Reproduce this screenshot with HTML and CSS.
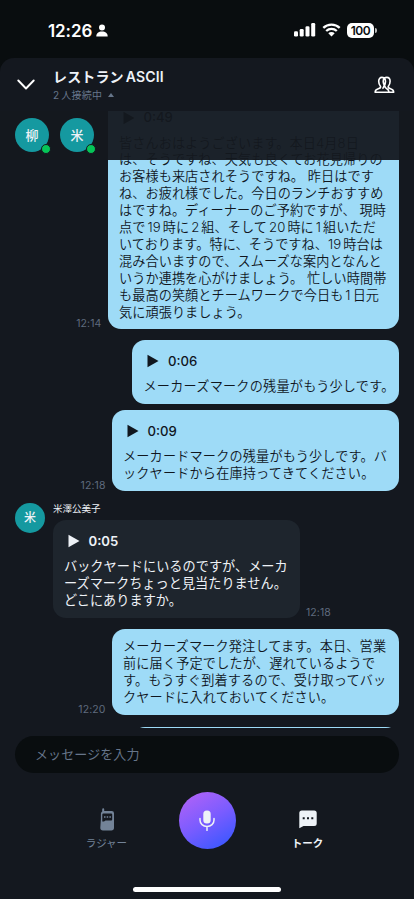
FILE: index.html
```html
<!DOCTYPE html>
<html lang="ja">
<head>
<meta charset="utf-8">
<title>レストランASCII</title>
<link rel="stylesheet" href="styles.css">
</head>
<body>
<div class="phone">
  <div class="status">
    <div class="clock">12:26
      <svg width="12" height="13" viewBox="0 0 12 13"><circle cx="6" cy="3.4" r="3"/><path d="M.3 12.4C.3 9.2 2.6 7.500 6 7.500s5.700 1.700 5.700 4.900z"/></svg>
    </div>
    <div class="signals">
      <svg width="22" height="14" viewBox="0 0 22 14"><rect x="0" y="8.300" width="4" height="5.200" rx="1.300"/><rect x="5.700" y="6" width="4" height="7.500" rx="1.300"/><rect x="11.500" y="3.200" width="4" height="10.300" rx="1.300"/><rect x="17.200" y="0" width="4" height="13.500" rx="1.300"/></svg>
      <svg class="wifi" width="19" height="14" viewBox="0 0 19 14"><path class="arc" d="M1.300 4.900a11.700 11.700 0 0 1 16.400 0M4.200 8a7.600 7.600 0 0 1 10.600 0"/><path d="M9.500 13.600 6.300 10.300a4.600 4.600 0 0 1 6.400 0z"/></svg>
      <div class="battery">100</div>
      <div class="tip"></div>
    </div>
  </div>
  <div class="app">
    <header class="head">
      <svg class="down" width="18" height="12" viewBox="0 0 18 12"><path d="M1.300 1.500 9 9.500l7.700-8"/></svg>
      <div class="titles">
        <h1>レストラン<span class="gap"></span>ASCII</h1>
        <p>2<span class="gap"></span>人接続中 <i class="tri"></i></p>
      </div>
      <svg class="people" width="21" height="18" viewBox="0 0 21 18"><path d="M6.600 10.500C5.400 9.200 4.700 7.500 4.700 5.300 4.700 2.800 6 1.400 7.900 1.400c1 0 1.800.4 2.400 1 .6-.6 1.400-1 2.500-1 2 0 3.300 1.400 3.300 3.900 0 2.200-.7 3.900-1.900 5.200-.2 1.300.4 1.700 2.300 2.300 2.300.7 3.100 1.300 3.200 3.500H1.100c.1-2.200.9-2.800 3.200-3.500 1.900-.6 2.500-1 2.300-2.300z"/><path d="M10.300 2.400c1 .9 1.300 1.900 1.200 3.200-.1 2-.7 3.500-1.700 4.700 0 1.200-.3 1.700-1.400 2.400M10.300 2.400C9.400 3.300 9.100 4.400 9.200 5.600c.1 2 .8 3.500 1.700 4.700.1 1.200.6 1.800 1.900 2.400 1.400.7 2 1.400 2.100 3.400"/></svg>
    </header>
    <main class="chat">
      <div class="members">
        <div class="avatar">柳<i></i></div>
        <div class="avatar">米<i></i></div>
      </div>
      <div class="list">
        <section class="row mine first">
          <time>12:14</time>
          <div class="bubble w-xl">
            <div class="play"><svg width="12" height="14" viewBox="0 0 12 14"><path d="M.5.8v12.400L11.500 7z"/></svg>0:49</div>
            <p>皆さんおはようございます。本日4月8日</p>
            <p>は、そうですね、天気も良くてお花見帰りの</p>
            <p>お客様も来店されそうですね。 昨日はです</p>
            <p>ね、お疲れ様でした。今日のランチおすすめ</p>
            <p>はですね。ディーナーのご予約ですが、 現時</p>
            <p>点で<b>19</b>時に<b>2</b>組、そして<b>20</b>時に<b>1</b>組いただ</p>
            <p>いております。特に、そうですね、<b class="after">19</b>時台は</p>
            <p>混み合いますので、スムーズな案内となんと</p>
            <p>いうか連携を心がけましょう。 忙しい時間帯</p>
            <p>も最高の笑顔とチームワークで今日も<b>1</b>日元</p>
            <p>気に頑張りましょう。</p>
          </div>
        </section>
        <section class="row mine second">
          <div class="bubble w-s">
            <div class="play"><svg width="12" height="14" viewBox="0 0 12 14"><path d="M.5.8v12.400L11.500 7z"/></svg>0:06</div>
            <p>メーカーズマークの残量がもう少しです。</p>
          </div>
        </section>
        <section class="row mine third">
          <time>12:18</time>
          <div class="bubble w-l">
            <div class="play"><svg width="12" height="14" viewBox="0 0 12 14"><path d="M.5.8v12.400L11.500 7z"/></svg>0:09</div>
            <p>メーカードマークの残量がもう少しです。バ</p>
            <p>ックヤードから在庫持ってきてください。</p>
          </div>
        </section>
        <section class="row theirs">
          <div class="avatar small">米</div>
          <div class="post">
            <div class="name">米澤公美子</div>
            <div class="bubble dark">
              <div class="play"><svg width="12" height="14" viewBox="0 0 12 14"><path d="M.5.8v12.400L11.500 7z"/></svg>0:05</div>
              <p>バックヤードにいるのですが、メーカ</p>
              <p>ーズマークちょっと見当たりません。</p>
              <p>どこにありますか。</p>
            </div>
          </div>
          <time>12:18</time>
        </section>
        <section class="row mine fourth">
          <time>12:20</time>
          <div class="bubble w-l textonly">
            <p>メーカーズマーク発注してます。本日、営業</p>
            <p>前に届く予定でしたが、遅れているようで</p>
            <p>す。もうすぐ到着するので、受け取ってバッ</p>
            <p>クヤードに入れておいてください。</p>
          </div>
        </section>
        <section class="row mine fifth"><div class="bubble w-s next"></div></section>
      </div>
    </main>
    <div class="input">メッセージを入力</div>
    <nav class="tabs">
      <div class="tab roger">
        <svg width="16" height="23" viewBox="0 0 16 23"><path d="M3.200 1.200a1 1 0 0 1 2 0V3h7.500a2.300 2.300 0 0 1 2.300 2.300v14.500a2.700 2.700 0 0 1-2.700 2.700H4a2.700 2.700 0 0 1-2.700-2.700L1.900 11V6c0-1.100.5-2 1.300-2.500z"/><path class="ink" d="M4.300 5.500h7.900a1 1 0 0 1 1 1v5a1 1 0 0 1-1 1H6.500l-1.500 1H3.300v-7a1 1 0 0 1 1-1z"/><path d="M5 8.200h1.500v1.500H5zM7.700 8.200h1.500v1.500H7.700zM10.400 8.200h1.500v1.500h-1.500z"/></svg>
        ラジャー
      </div>
      <div class="mic">
        <svg width="16" height="21" viewBox="0 0 16 21"><rect x="4.300" y=".5" width="7.400" height="13" rx="3.500"/><path class="stroke" d="M1 8.500v1.500c0 3.800 3 6.400 7 6.400s7-2.600 7-6.400V8.500M8 16.400v4"/></svg>
      </div>
      <div class="tab talk">
        <svg width="18" height="19" viewBox="0 0 18 19"><path d="M2.800.5h12.400a2.500 2.500 0 0 1 2.500 2.500v10.500a2.500 2.500 0 0 1-2.500 2.500H4.500L.3 18.300V3A2.500 2.500 0 0 1 2.800.5z"/><path class="ink" d="M3.700 7.300h2v2h-2zM8 7.300h2v2H8zM12.300 7.300h2v2h-2z"/></svg>
        トーク
      </div>
    </nav>
    <div class="homebar"></div>
  </div>
</div>
</body>
</html>
```
FILE: styles.css
```css
* { box-sizing: border-box; }
body {
  margin: 0;
  background: #090d0f;
  font-family: Inter, "Noto Sans CJK JP", sans-serif;
  color: #eef2f7;
}
h1, p { margin: 0; }
svg { display: block; fill: currentColor; flex: none; }
.phone { width: 414px; height: 899px; overflow: hidden; display: flex; flex-direction: column; }

.status { height: 58px; flex: none; display: flex; justify-content: space-between; padding: 0 37px 0 48px; color: #fff; }
.clock { display: flex; align-items: center; gap: 4px; height: 61px; font-size: 17px; font-weight: 600; letter-spacing: -.1px; }
.signals { display: flex; align-items: center; height: 60px; }
.wifi { margin-left: 6px; }
.wifi .arc { fill: none; stroke: #fff; stroke-width: 2.300; }
.battery { width: 27px; height: 15px; margin-left: 6px; border-radius: 5px; background: #fff; color: #090d0f; font-size: 12px; font-weight: 600; line-height: 15px; text-align: center; letter-spacing: -.4px; }
.tip { width: 2px; height: 5px; margin-left: 1px; border-radius: 0 2px 2px 0; background: #bbb; }

.app { flex: 1; min-height: 0; display: flex; flex-direction: column; background: #14181f; border-radius: 14px 14px 0 0; }
.head { height: 53px; flex: none; display: flex; padding: 0 19px 0 17px; }
.down { margin-top: 21px; fill: none; stroke: #fff; stroke-width: 1.900; stroke-linecap: round; stroke-linejoin: round; }
.titles { flex: 1; padding: 9px 0 0 18px; }
h1 { font-size: 14px; line-height: 20px; font-weight: 600; white-space: nowrap; letter-spacing: .15px; }
.gap { display: inline-block; width: 2px; }
.titles p { font-size: 10px; line-height: 16px; color: #66758a; white-space: nowrap; letter-spacing: .25px; }
.tri { display: inline-block; margin: 0 0 2px 3px; border: 3.500px solid transparent; border-top: 0; border-bottom: 4px solid #66758a; }
.people { margin-top: 18px; fill: none; stroke: #fff; stroke-width: 1.600; stroke-linejoin: round; }

.chat { position: relative; height: 617px; flex: none; overflow: hidden; }
.members { position: absolute; z-index: 1; top: 0; left: 0; right: 0; height: 48.500px; padding: 7px 15px; display: flex; gap: 11px; background: rgba(20, 24, 31, .95); }
.avatar { position: relative; width: 34px; height: 34px; flex: none; border-radius: 50%; background: #1599a0; font-size: 13px; font-weight: 500; line-height: 34px; text-align: center; }
.avatar i { position: absolute; right: -2px; bottom: -2px; width: 10px; height: 10px; border-radius: 50%; background: #05c557; border: 1px solid #14181f; }
.small { width: 30px; height: 30px; line-height: 30px; font-size: 12px; margin-top: 1px; }

.list { margin-top: -14.500px; padding: 0 15px; display: flex; flex-direction: column; }
.row { display: flex; align-items: flex-end; }
.mine { justify-content: flex-end; }
time { flex: none; font-size: 10.500px; line-height: 12px; color: #5f6b7e; padding: 0 6px; margin-bottom: -1px; letter-spacing: .1px; }
.bubble { flex: none; padding: 9px 11.500px; border-radius: 13px; background: #9edbf7; color: #10161e; font-size: 13.150px; line-height: 16.900px; }
.bubble p { white-space: pre; font-weight: 350; letter-spacing: .17px; }
.bubble b { font-weight: 350; margin: 0 2px; }
.bubble .after { margin-left: 0; }
.bubble.dark p { font-weight: 400; letter-spacing: .03px; }
.w-xl { width: 291.500px; }
.bubble.w-xl p { letter-spacing: .08px; }
.w-l { width: 287.500px; }
.w-s { width: 267px; }
.bubble.w-s p { letter-spacing: .22px; }
.play { display: flex; align-items: center; gap: 9px; height: 24px; margin-bottom: 5px; padding-left: 3.500px; font-weight: 500; }
.second { margin-top: 11px; }
.third { margin-top: 6px; }
.theirs { margin-top: 11px; }
.theirs .avatar { align-self: flex-start; }
.post { margin-left: 8px; }
.name { font-size: 9.500px; line-height: 14px; margin-bottom: 4px; }
.dark { width: 247px; padding-left: 11px; background: #1e252d; color: #eef2f7; }
.dark .play { font-weight: 600; }
.fourth { margin-top: 11px; }
.fifth { margin-top: 12px; }
.next { height: 64px; }

.input { height: 37px; margin: 8px 15px 0; flex: none; border-radius: 19px; background: #090d0f; padding-left: 20px; font-size: 13px; line-height: 36px; color: #66758a; letter-spacing: .1px; }
.tabs { height: 105px; flex: none; display: flex; justify-content: center; padding-top: 19px; }
.tab { width: 58px; padding-top: 16px; display: flex; flex-direction: column; align-items: center; font-size: 10.500px; line-height: 16px; gap: 5px; }
.roger { margin-right: 43px; color: #738398; }
.talk { margin-left: 43px; font-weight: 700; }
.ink { fill: #14181f; }
.talk svg { margin: 2px 0; }
.mic { width: 57px; height: 57px; border-radius: 50%; display: flex; align-items: center; justify-content: center; background: linear-gradient(150deg, #ae62f7 8%, #7a5cff 50%, #3557ff 95%); }
.stroke { fill: none; stroke: #eef2f7; stroke-width: 1.500; stroke-linecap: round; }
.homebar { width: 148px; height: 5px; margin: 9px auto 0; flex: none; border-radius: 3px; background: #fff; }
```
